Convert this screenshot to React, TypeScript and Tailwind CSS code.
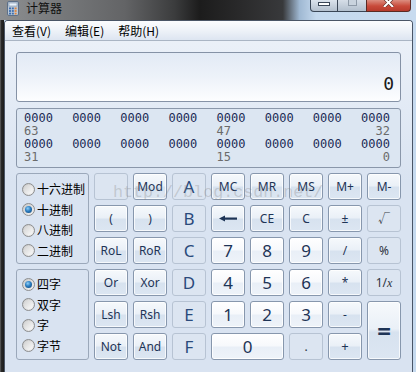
import React from "react";

type Kind = "fn" | "num" | "dis";

const kindCls: Record<Kind, string> = {
  fn: "border-[#8797ad] bg-[linear-gradient(to_bottom,#f6f9fc_0%,#eaf0f7_47%,#d7e2ef_53%,#dce6f2_100%)] shadow-[inset_0_0_0_1px_rgba(255,255,255,0.75)]",
  num: "border-[#8797ad] bg-[linear-gradient(to_bottom,#ffffff_0%,#f7f9fc_47%,#e9eff7_53%,#eef3f9_100%)] shadow-[inset_0_0_0_1px_rgba(255,255,255,0.85)]",
  dis: "border-[#b7c3d3] bg-[#dce5f1]",
};

function Btn({
  children,
  kind = "fn",
  cls = "",
}: {
  children?: React.ReactNode;
  kind?: Kind;
  cls?: string;
}) {
  return (
    <div
      className={
        "flex items-center justify-center rounded-[3px] border text-[#1e3456] " +
        kindCls[kind] +
        " " +
        cls
      }
    >
      {children}
    </div>
  );
}

function Radio({ checked, label }: { checked?: boolean; label: string }) {
  return (
    <div className="flex h-[20.5px] items-center gap-[2px]">
      <span className="flex h-[13px] w-[13px] items-center justify-center rounded-full border border-[#8c8d8e] bg-[linear-gradient(135deg,#c9c9c9,#f2f2f2)]">
        {checked ? (
          <span className="h-[7px] w-[7px] rounded-full bg-[radial-gradient(circle_at_40%_35%,#8fd0f8_0%,#2a7cc0_45%,#0c3f70_100%)]" />
        ) : (
          <span className="h-[9px] w-[9px] rounded-full bg-[linear-gradient(135deg,#d2d2d2,#fbfbfb)]" />
        )}
      </span>
      <span className="text-[12px] leading-[14px] text-black">{label}</span>
    </div>
  );
}

function BinRow() {
  return (
    <div className="flex h-[13px] justify-between text-[#1b2b55]">
      {Array.from({ length: 8 }).map((_, i) => (
        <span key={i} className="w-[29px]">
          0000
        </span>
      ))}
    </div>
  );
}

function NumRow({ a, b, c }: { a: string; b: string; c: string }) {
  return (
    <div className="flex h-[13px] justify-between text-[#6b6b6b]">
      <span className="w-[29px]">{a}</span>
      <span className="w-[29px]" />
      <span className="w-[29px]" />
      <span className="w-[29px]" />
      <span className="w-[29px]">{b}</span>
      <span className="w-[29px]" />
      <span className="w-[29px]" />
      <span className="w-[29px] text-right">{c}</span>
    </div>
  );
}

export default function App() {
  const num = "text-[17px] font-normal";
  const hex = "text-[17px] text-[#2a4a7b]";
  const sm = "text-[12px]";
  return (
    <div className="relative h-[372px] w-[416px] overflow-hidden bg-[#c8dbef] font-['Noto_Sans','Noto_Sans_CJK_SC',sans-serif]">
      {/* title bar */}
      <div className="flex h-[20px] items-start bg-[linear-gradient(to_right,#8d8f91_0%,#76787a_15%,#636466_30%,#3b3c3d_42%,#1c1c1c_48%,#2a2a2b_58%,#38393b_68%,#9fb8d2_72%,#c5d9ee_76%,#c8dbef_100%)]">
        <svg className="ml-[7px] mt-[1px]" width="12" height="15" viewBox="0 0 12 15">
          <rect x="0.5" y="0.5" width="11" height="14" rx="1.5" fill="#b9c8d8" stroke="#5d7088" />
          <rect x="2" y="2" width="8" height="3" fill="#e9f2fb" stroke="#7b8ea5" strokeWidth="0.6" />
          {[0, 1, 2].map((r) =>
            [0, 1, 2].map((c) => (
              <rect
                key={r + "-" + c}
                x={2 + c * 2.8}
                y={6.5 + r * 2.6}
                width="2"
                height="1.8"
                fill={c === 2 ? "#e0843a" : "#3f6fb0"}
              />
            ))
          )}
        </svg>
        <span className="ml-[7px] mt-[1px] font-['Noto_Sans_CJK_SC',sans-serif] text-[12px] leading-[14px] text-[#111]">
          计算器
        </span>
        <div className="ml-auto mr-[5px] flex h-[12px]">
          <div className="flex w-[28px] items-start justify-center rounded-bl-[4px] border border-t-0 border-[#3a4656] bg-[linear-gradient(to_bottom,#dbe3ec,#b4c0ce)]">
            <div className="mt-[2px] h-[4px] w-[12px] border border-[#3a4656] bg-white" />
          </div>
          <div className="flex w-[28px] items-start justify-center border-y border-[#3a4656] border-t-0 bg-[linear-gradient(to_bottom,#d6dee8,#b2bfcd)]">
            <div className="h-[6px] w-[9px] border border-t-0 border-[#8e9aa8] bg-[#c9d3de]" />
          </div>
          <div className="flex w-[45px] items-start justify-center rounded-br-[4px] border border-t-0 border-[#5a2a24] bg-[linear-gradient(to_bottom,#dc8e80,#c84a3a_55%,#b73a2c)]">
            <svg width="11" height="7" viewBox="0 0 11 7">
              <path d="M1 -2 L10 7 M10 -2 L1 7" stroke="#5a2a24" strokeWidth="3.2" />
              <path d="M1 -2 L10 7 M10 -2 L1 7" stroke="#ffffff" strokeWidth="2" />
            </svg>
          </div>
        </div>
      </div>

      {/* body */}
      <div className="flex h-[352px]">
        <div className="w-[4px] bg-[linear-gradient(to_right,#6e6e6e_0%,#2a2a2a_30%,#1c1c1c_100%)]" />
        <div className="flex w-[409px] flex-col overflow-hidden rounded-t-[4px] border-x border-t border-[#4a5566] bg-[linear-gradient(to_bottom,#edf2f9_0px,#e2eaf5_90px,#d9e3f1_160px,#d9e3f1_100%)]">
          {/* menu */}
          <div className="flex h-[20px] items-center gap-[14px] border-b border-[#aab5c4] bg-[linear-gradient(to_bottom,#fbfcfe_0%,#eef2f8_50%,#dde5f1_100%)] pl-[7px] font-['Noto_Sans_CJK_SC',sans-serif] text-[12px] text-black">
            <span>查看(V)</span>
            <span>编辑(E)</span>
            <span>帮助(H)</span>
          </div>

          <div className="flex flex-col px-[11px] pt-[11px]">
            {/* display */}
            <div className="flex h-[50px] items-end justify-end rounded-[3px] border border-[#8592a6] bg-[linear-gradient(to_bottom,#e2eaf5_0%,#edf2f9_50%,#fdfeff_100%)] pb-[6px] pr-[6px]">
              <span className="font-['DejaVu_Sans_Mono',monospace] text-[18px] leading-[22px] text-[#1a1a1a]">
                0
              </span>
            </div>

            {/* binary */}
            <div className="mt-[6px] flex h-[60px] flex-col rounded-[3px] border border-[#8a97aa] bg-[#dce6f2] pl-[7px] pr-[10px] pt-[3px] font-['DejaVu_Sans_Mono',monospace] text-[12px] leading-[13px]">
              <BinRow />
              <NumRow a="63" b="47" c="32" />
              <BinRow />
              <NumRow a="31" b="15" c="0" />
            </div>

            {/* keypad */}
            <div className="mt-[5px] grid grid-cols-[73px_repeat(8,34px)] grid-rows-[repeat(6,27px)] gap-[5px]">
              <div className="row-span-3 flex flex-col rounded-[3px] border border-[#9ba8ba] pl-[5px] pt-[5px] font-['Noto_Sans_CJK_SC',sans-serif]">
                <Radio label="十六进制" />
                <Radio label="十进制" checked />
                <Radio label="八进制" />
                <Radio label="二进制" />
              </div>
              <Btn kind="dis" />
              <Btn cls={sm}>Mod</Btn>
              <Btn kind="dis" cls={hex}>A</Btn>
              <Btn cls={sm}>MC</Btn>
              <Btn cls={sm}>MR</Btn>
              <Btn cls={sm}>MS</Btn>
              <Btn cls={sm}>M+</Btn>
              <Btn cls={sm}>M-</Btn>

              <Btn cls={sm}>(</Btn>
              <Btn cls={sm}>)</Btn>
              <Btn kind="dis" cls={hex}>B</Btn>
              <Btn>
                <svg width="18" height="7" viewBox="0 0 18 7">
                  <path d="M0 3.5 L6 0.5 L6 6.5 Z" fill="#1e3456" />
                  <rect x="5" y="2.5" width="13" height="2.2" fill="#1e3456" />
                </svg>
              </Btn>
              <Btn cls={sm}>CE</Btn>
              <Btn cls={sm}>C</Btn>
              <Btn cls={sm}>±</Btn>
              <Btn kind="dis" cls="text-[12px] text-[#3a3f48]">√</Btn>

              <Btn cls={sm}>RoL</Btn>
              <Btn cls={sm}>RoR</Btn>
              <Btn kind="dis" cls={hex}>C</Btn>
              <Btn kind="num" cls={num}>7</Btn>
              <Btn kind="num" cls={num}>8</Btn>
              <Btn kind="num" cls={num}>9</Btn>
              <Btn cls={sm}>/</Btn>
              <Btn kind="dis" cls="text-[12px] text-[#2d3340]">%</Btn>

              <div className="row-span-3 flex flex-col rounded-[3px] border border-[#9ba8ba] pl-[5px] pt-[4px] font-['Noto_Sans_CJK_SC',sans-serif]">
                <Radio label="四字" checked />
                <Radio label="双字" />
                <Radio label="字" />
                <Radio label="字节" />
              </div>
              <Btn cls={sm}>Or</Btn>
              <Btn cls={sm}>Xor</Btn>
              <Btn kind="dis" cls={hex}>D</Btn>
              <Btn kind="num" cls={num}>4</Btn>
              <Btn kind="num" cls={num}>5</Btn>
              <Btn kind="num" cls={num}>6</Btn>
              <Btn cls={sm}>*</Btn>
              <Btn kind="dis" cls="text-[12px] text-[#2d3340]">
                1/<span className="font-['Liberation_Serif',serif] italic">x</span>
              </Btn>

              <Btn cls={sm}>Lsh</Btn>
              <Btn cls={sm}>Rsh</Btn>
              <Btn kind="dis" cls={hex}>E</Btn>
              <Btn kind="num" cls={num}>1</Btn>
              <Btn kind="num" cls={num}>2</Btn>
              <Btn kind="num" cls={num}>3</Btn>
              <Btn cls={sm}>-</Btn>
              <Btn cls="row-span-2 text-[24px] font-bold">=</Btn>

              <Btn cls={sm}>Not</Btn>
              <Btn cls={sm}>And</Btn>
              <Btn kind="dis" cls={hex}>F</Btn>
              <Btn kind="num" cls={"col-span-2 " + num}>0</Btn>
              <Btn kind="dis" cls="text-[12px] text-[#2d3340]">.</Btn>
              <Btn cls="text-[13px]">+</Btn>
            </div>
          </div>
        </div>
        <div className="w-[3px] bg-[#c6daef]" />
      </div>

      {/* watermark */}
      <div className="pointer-events-none absolute left-[113px] top-[183px] font-['Liberation_Mono',monospace] text-[16.7px] leading-[20px] text-[rgba(130,130,130,0.3)]">
        http://blog.csdn.net/
      </div>
    </div>
  );
}
